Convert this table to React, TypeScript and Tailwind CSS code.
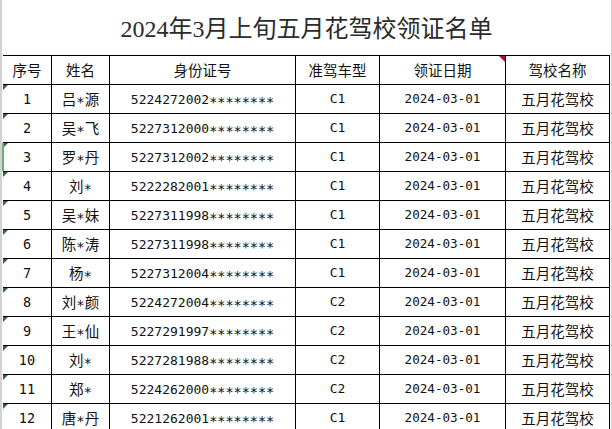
import React from "react";

const rows: [string, string, string, string][] = [
  ["1", "吕*源", "5224272002", "C1"],
  ["2", "吴*飞", "5227312000", "C1"],
  ["3", "罗*丹", "5227312002", "C1"],
  ["4", "刘*", "5222282001", "C1"],
  ["5", "吴*妹", "5227311998", "C1"],
  ["6", "陈*涛", "5227311998", "C1"],
  ["7", "杨*", "5227312004", "C1"],
  ["8", "刘*颜", "5224272004", "C2"],
  ["9", "王*仙", "5227291997", "C2"],
  ["10", "刘*", "5227281988", "C2"],
  ["11", "郑*", "5224262000", "C2"],
  ["12", "唐*丹", "5221262001", "C1"],
];

const cjk = { fontFamily: '"Noto Sans CJK SC", "Liberation Sans", sans-serif' };
const mono = { fontFamily: '"DejaVu Sans Mono", "Noto Sans CJK SC", monospace' };

function Name({ s }: { s: string }) {
  const parts = s.split("*");
  return (
    <>
      {parts[0]}
      <span className="relative top-[2px] text-[14px]" style={mono}>*</span>
      {parts[1]}
    </>
  );
}

export default function App() {
  return (
    <div className="w-[612px] h-[429px] overflow-hidden bg-white flex text-[#111]">
      <div className="w-[2px] shrink-0 bg-[#d2d2d2]" />
      <div className="w-[1px] shrink-0" />
      <div className="w-[607px] shrink-0 flex flex-col">
        <div
          className="h-[55px] shrink-0 flex items-center justify-center text-[24px] text-[#2b2b2b] pt-[2px]"
          style={{ fontFamily: '"Liberation Serif", "Noto Sans CJK SC", serif' }}
        >
          2024年3月上旬五月花驾校领证名单
        </div>
        <div className="border-t border-black shrink-0">
          <div className="flex h-[29px] border-b border-black text-[14.5px]" style={cjk}>
            <div className="w-[49px] border-r border-black flex items-center justify-center">序号</div>
            <div className="w-[58px] border-r border-black flex items-center justify-center">姓名</div>
            <div className="w-[186px] border-r border-black flex items-center justify-center">身份证号</div>
            <div className="w-[84px] border-r border-black flex items-center justify-center">准驾车型</div>
            <div className="w-[126px] border-r border-black flex items-center justify-center relative">
              领证日期
              <div className="absolute top-0 right-0 w-[6px] h-[6px] bg-[#a3142c] [clip-path:polygon(0_0,100%_0,100%_100%)]" />
            </div>
            <div className="w-[104px] border-r border-black flex items-center justify-center">驾校名称</div>
          </div>
          {rows.map(([n, name, id, type], i) => (
            <div key={n} className="flex h-[29px] border-b border-black">
              <div
                className="w-[49px] border-r border-black flex items-center justify-center relative text-[13.5px]"
                style={mono}
              >
                <div className="absolute top-0 left-0 w-[5px] h-[5px] bg-[#2f6b3a] [clip-path:polygon(0_0,100%_0,0_100%)]" />
                {i === 2 && <div className="absolute top-0 left-[-1px] w-[2px] h-[28px] bg-[#6fae6f]" />}
                {n}
              </div>
              <div className="w-[58px] border-r border-black flex items-center justify-center text-[14.5px]" style={cjk}>
                <span>
                  <Name s={name} />
                </span>
              </div>
              <div className="w-[186px] border-r border-black flex items-center justify-center text-[13px]" style={mono}>
                <span>
                  {id}
                  <span className="relative top-[3px] text-[13.5px]">********</span>
                </span>
              </div>
              <div className="w-[84px] border-r border-black flex items-center justify-center text-[13px]" style={mono}>
                {type}
              </div>
              <div className="w-[126px] border-r border-black flex items-center justify-center text-[12.6px]" style={mono}>
                2024-03-01
              </div>
              <div className="w-[104px] border-r border-black flex items-center justify-center text-[14.5px]" style={cjk}>
                五月花驾校
              </div>
            </div>
          ))}
        </div>
      </div>
      <div className="w-[1px] shrink-0" />
      <div className="w-[1px] shrink-0 bg-[#d2d2d2]" />
    </div>
  );
}
